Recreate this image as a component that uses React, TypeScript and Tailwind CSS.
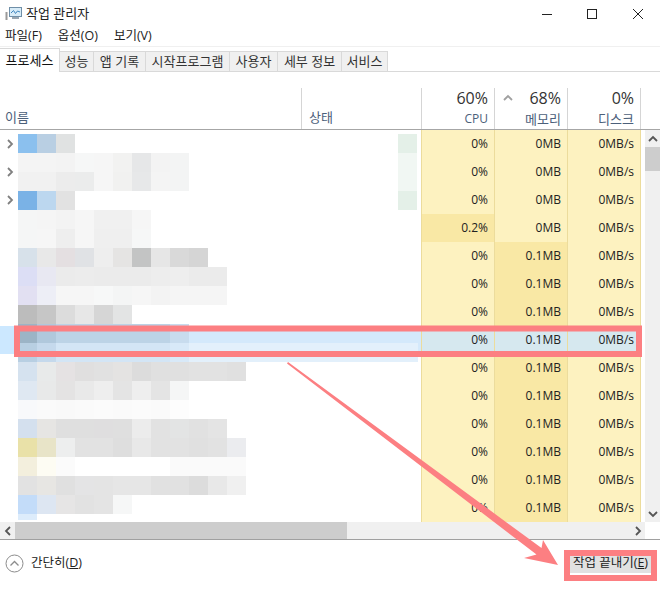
const FONT = 'font-["Open_Sans","Noto_Sans_CJK_KR",sans-serif]';

const TABS = [
  { label: '성능', w: 'w-[34px]' },
  { label: '앱 기록', w: 'w-[52px]' },
  { label: '시작프로그램', w: 'w-[84px]' },
  { label: '사용자', w: 'w-[48px]' },
  { label: '세부 정보', w: 'w-[64px]' },
  { label: '서비스', w: 'w-[46px]' },
];

const ROWS = Array.from({ length: 14 }, (_, i) => ({
  cpu: i === 3 ? '0.2%' : '0%',
  mem: i < 4 ? '0MB' : '0.1MB',
  disk: '0MB/s',
  expandable: i < 3,
  selected: i === 7,
  hotCpu: i === 3,
  hotMem: i >= 4,
}));

// censored process names, one string of hex colours per 19px mosaic band
const MOSAIC = [
  '8bc0ee b9cfe3 e0e2e2',
  'f4f4f4 f4f4f4 f3f3f3 f6f7f7 f6f6f6 f2f2f1 e6e7e8 f3f3f3 f3f4f4',
  'f1f1f1 f1f1f1 ececec ebecec f6f6f6 f1f1f0 e7e8e9 f4f4f4 f3f4f4',
  '7ab2e6 bcd7ef e2e2e2',
  'f5f6f6 f5f5f5 f3f3f3 f6f6f6 f0f0f0 f0f0f0 f6f6f6',
  'f5f6f6 f6f6f6 eeeeee f6f6f6 efefef efefef f6f7f7',
  'd7e1ea e8e8e8 e4dfe1 e0e2e5 eeeeee e5e4e3 c3c4c4 e6e6e6 d9d9d9 d5d5d5',
  'dcdef5 e8e8f2 ebebeb ececec ebebeb ebebeb ebebeb ededed eeeeee ebebeb ebebeb',
  'e2e0f2 edeef6 f6f6f6 f6f6f6 f7f8f8 f4f5f5 f6f6f6 f3f3f3 f5f5f5 f5f5f5 f5f5f5',
  'bcbcbc c6c6c6 dcdcdc e7e7e7 d6d6d6 e3e4e4',
  '9cb4c6 b0c8dc bcd3e6 bcd3e6 bcd3e6 bcd3e6 bcd3e6 bcd3e6 c8dcee',
  'b8cfe2 c5d9ec d3e5f5 d3e5f5 d3e5f5 d3e5f5 d3e5f5 d3e5f5 d8e9f8',
  'd5e2ef e8eaea e5e2e3 e0dfdf e1e1e1 e4e3e2 dcdcdc e0e0e0 e0e0e0 e2e2e2 e2e2e2 e0e0e0',
  'dfe8f2 e8e9e9 e4e3e3 e9e9e9 eeeeee e4e4e4 eeeeee e4e4e4 f5f6f6',
  'f8f9fb fafafa f9f9f9 fafafa fbfbfb fafafa fbfbfb fafafa fdfdfd',
  'd4e0ee e6e5e3 dfdfdf dfdfdf dfdedf dfdfdf ececec e2e2e2 e3e4e4 e1e1e1 e4e4e4',
  'e9e1a8 e8e4c8 edeeee e2e2e2 e2e2e2 dedede e8e8e8 e2e2e2 e2e2e2 e0e0e0 e2e2e2 ebecef',
  'f3efdd fdfcf3 fbfbfb ffffff ffffff ffffff ffffff ffffff fafafa fafafa fafafa fafafa',
  'e2e2e2 e7e6e3 e0e0e0 e4e4e5 e4e4e4 e6e6e6 e6e6e6 e1e1e1 e1e1e1 dcdcdc e8e8e8 f0f0f0',
  'c3dcf9 dde6f2 e6e5e5 e2e2e2 e4e4e4 f6f7f7',
];

function Mosaic() {
  return (
    <svg className="pointer-events-none absolute left-0 top-0" width="421" height="392" viewBox="0 130 421 392">
      {MOSAIC.map((band, y) =>
        band.split(' ').map((c, x) => (
          <rect key={`${y}-${x}`} x={18 + x * 19} y={134 + y * 19} width="19" height="19" fill={`#${c}`} />
        )),
      )}
      <rect x="18" y="514" width="19" height="6" fill="#ddecfb" />
      <rect x="189" y="343" width="229" height="19" fill="#e3f0fb" />
      <rect x="398" y="134" width="19" height="19" fill="#e4f0e8" />
      <rect x="398" y="153" width="19" height="38" fill="#f1f7f3" />
      <rect x="398" y="191" width="19" height="19" fill="#e4f0e8" />
    </svg>
  );
}

function Annotations() {
  return (
    <svg className="pointer-events-none absolute left-0 top-0" width="660" height="589" viewBox="0 0 660 589">
      <rect x="17" y="328.5" width="622" height="25.5" fill="none" stroke="#fc7f82" strokeWidth="6" />
      <rect x="567" y="553" width="87" height="25" fill="none" stroke="#fc7f82" strokeWidth="6" />
      <polygon points="288,362 541.5,548 543,540 558,565 524,558 536.5,554.5 287,363.5" fill="#fc7f82" />
    </svg>
  );
}

function Chevron({ dir, className }: { dir: 'up' | 'down' | 'left' | 'right'; className?: string }) {
  const d = {
    up: 'M1 6 L5 2 L9 6',
    down: 'M1 2 L5 6 L9 2',
    left: 'M6 1 L2 5 L6 9',
    right: 'M2 1 L6 5 L2 9',
  }[dir];
  const vb = dir === 'up' || dir === 'down' ? '0 0 10 8' : '0 0 8 10';
  const size = dir === 'up' || dir === 'down' ? { width: 10, height: 8 } : { width: 8, height: 10 };
  return (
    <svg {...size} viewBox={vb} className={className} fill="none" stroke="currentColor" strokeWidth="1.8">
      <path d={d} />
    </svg>
  );
}

function TitleBar() {
  return (
    <div className="flex h-[27px] items-center">
      <svg className="ml-[5px]" width="17" height="15" viewBox="0 0 17 15">
        <rect x="0.5" y="6" width="2" height="8" fill="#9a9a9a" />
        <rect x="4.5" y="1.5" width="12" height="9" fill="#d8ecf8" stroke="#6f8fa8" />
        <path d="M6 7 L8.5 4.5 L10.5 7.5 L12.5 5 L15 6" fill="none" stroke="#3f87c0" />
        <rect x="7" y="11" width="7" height="2" fill="#9aa7b2" />
      </svg>
      <span className="ml-[4px] text-[13px] text-[#222]">작업 관리자</span>
      <div className="ml-auto flex items-center text-[#222]">
        <svg width="12" height="12" viewBox="0 0 12 12" className="mr-[33px]">
          <path d="M1 6.5 H11" stroke="currentColor" />
        </svg>
        <svg width="12" height="12" viewBox="0 0 12 12" className="mr-[34px]">
          <rect x="1.5" y="1.5" width="9" height="9" fill="none" stroke="currentColor" />
        </svg>
        <svg width="12" height="12" viewBox="0 0 12 12" className="mr-[16px]">
          <path d="M1 1 L11 11 M11 1 L1 11" stroke="currentColor" />
        </svg>
      </div>
    </div>
  );
}

function MenuBar() {
  return (
    <div className="flex h-[20px] items-center gap-[16px] border-b border-[#f0f0f0] pl-[5px] text-[12.5px] text-[#222]">
      <span>파일(F)</span>
      <span>옵션(O)</span>
      <span>보기(V)</span>
    </div>
  );
}

function TabBar() {
  return (
    <div className="flex h-[25px] items-end border-b border-[#d9d9d9] text-[13px] text-[#333]">
      <div className="relative z-10 -mb-px flex h-[24px] w-[60px] items-center justify-center border-r border-t border-[#d9d9d9] bg-white text-[#111]">
        프로세스
      </div>
      {TABS.map((t) => (
        <div
          key={t.label}
          className={`flex h-[20px] items-center justify-center border-r border-t border-[#d9d9d9] bg-[#f0f0f0] ${t.w}`}
        >
          {t.label}
        </div>
      ))}
    </div>
  );
}

function HeaderCol({ pct, label, caret }: { pct: string; label: string; caret?: boolean }) {
  return (
    <div className="relative flex w-[73px] flex-col items-end border-r border-[#d5d5d5] pr-[6px]">
      {caret && <Chevron dir="up" className="absolute left-[8px] top-[6px] text-[#a0a0a0]" />}
      <span className="text-[16px] leading-[20px] text-[#333]">{pct}</span>
      <span className={`mt-[1px] leading-[20px] text-[#4c607a] ${label === 'CPU' ? 'text-[12px]' : 'text-[13px]'}`}>
        {label}
      </span>
    </div>
  );
}

function TableHeader() {
  return (
    <div className="flex h-[58px] items-end border-b border-[#a6a6a6] pt-[1px]">
      <div className="flex h-[41px] w-[302px] items-end border-r border-[#d5d5d5] pb-[2px] pl-[5px] text-[13px] text-[#4c607a]">
        이름
      </div>
      <div className="flex h-[41px] w-[119px] items-end pb-[2px] pl-[7px] text-[13px] text-[#4c607a]">상태</div>
      <div className="flex h-[41px] border-l border-[#d5d5d5]">
        <HeaderCol pct="60%" label="CPU" />
        <HeaderCol pct="68%" label="메모리" caret />
        <HeaderCol pct="0%" label="디스크" />
      </div>
    </div>
  );
}

function Cell({ value, selected, hot }: { value: string; selected: boolean; hot: boolean }) {
  const bg = selected ? 'bg-[#d6e8ef]' : hot ? 'bg-[#f9e8a5]' : 'bg-[#fdf2c0]';
  return <div className={`flex w-[73px] items-center justify-end border-r border-[#ecdc9c] pr-[6px] ${bg}`}>{value}</div>;
}

function ProcessRows() {
  return (
    <div className="relative h-[394px] w-[645px] overflow-hidden">
      {ROWS.map((r, i) => (
        <div key={i} className="flex h-[28px] text-[12px] text-[#222]">
          <div className={`flex w-[421px] items-center pl-[6px] text-[#808080] ${r.selected ? 'bg-[#d4e9fb]' : ''}`}>
            {r.expandable && <Chevron dir="right" />}
          </div>
          <div className="border-l border-[#ecdc9c]" />
          <Cell value={r.cpu} selected={r.selected} hot={r.hotCpu} />
          <Cell value={r.mem} selected={r.selected} hot={r.hotMem} />
          <Cell value={r.disk} selected={r.selected} hot={false} />
        </div>
      ))}
      <Mosaic />
      <div className="absolute left-0 top-[196px] h-[28px] w-[14px] bg-[#cce8ff]" />
    </div>
  );
}

function VScroll() {
  return (
    <div className="flex h-[392px] w-[15px] flex-col items-center bg-[#f0f0f0] text-[#555]">
      <div className="flex h-[17px] items-center">
        <Chevron dir="up" />
      </div>
      <div className="h-[24px] w-full bg-[#cdcdcd]" />
      <div className="mt-auto flex h-[17px] items-center">
        <Chevron dir="down" />
      </div>
    </div>
  );
}

function HScroll() {
  return (
    <div className="flex h-[17px] w-[645px] items-center bg-[#f0f0f0] text-[#555]">
      <div className="flex w-[15px] justify-center">
        <Chevron dir="left" />
      </div>
      <div className="h-full w-[332px] bg-[#cdcdcd]" />
      <div className="ml-auto flex w-[15px] justify-center">
        <Chevron dir="right" />
      </div>
    </div>
  );
}

function Footer() {
  return (
    <div className="flex h-[48px] items-center border-t border-[#a0a0a0] text-[12.5px] text-[#222]">
      <svg className="ml-[5px]" width="19" height="19" viewBox="0 0 19 19" fill="none">
        <circle cx="9.5" cy="9.5" r="8.5" stroke="#8c8c8c" />
        <path d="M5.5 11.5 L9.5 7.5 L13.5 11.5" stroke="#8c8c8c" strokeWidth="1.3" />
      </svg>
      <span className="ml-[7px]">
        간단히(<span className="underline">D</span>)
      </span>
      <div className="ml-auto mr-[9px] flex h-[19px] w-[81px] items-center justify-center whitespace-nowrap bg-[#e1e1e1]">
        <span>
          작업 끝내기(<span className="underline">E</span>)
        </span>
      </div>
    </div>
  );
}

export default function App() {
  return (
    <div className={`relative h-[589px] w-[660px] overflow-hidden bg-white ${FONT}`}>
      <TitleBar />
      <MenuBar />
      <TabBar />
      <TableHeader />
      <div className="flex">
        <ProcessRows />
        <VScroll />
      </div>
      <div className="-mt-[2px]">
        <HScroll />
      </div>
      <Footer />
      <Annotations />
    </div>
  );
}
